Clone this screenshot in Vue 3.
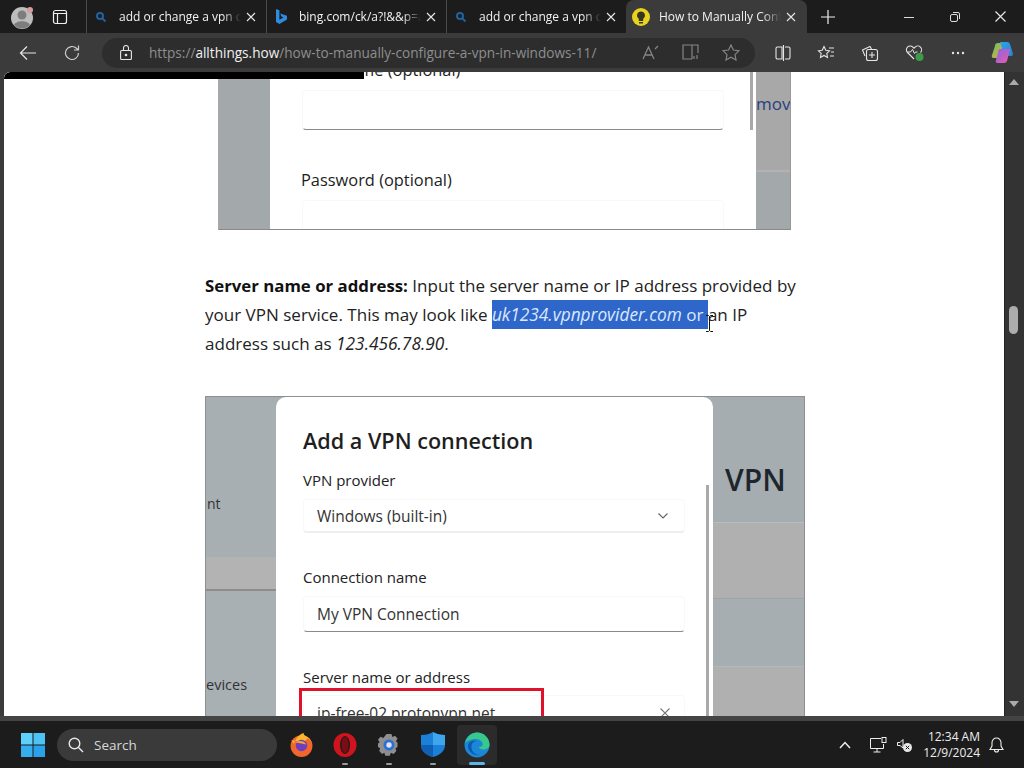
<script setup>
const tabs = [
  { title: 'add or change a vpn connection', icon: 'search' },
  { title: 'bing.com/ck/a?!&&p=abcdef', icon: 'bing' },
  { title: 'add or change a vpn connection', icon: 'search' },
  { title: 'How to Manually Configure', icon: 'bulb', active: true }
]
</script>

<template>
  <div class="screen">
    <header class="tabstrip">
      <div class="avatar">
        <svg width="24" height="24" viewBox="0 0 24 24">
          <circle cx="12" cy="13" r="11" fill="#bdbdbd" />
          <circle cx="12" cy="10" r="4.5" fill="#7d7d7d" />
          <path d="M4 20c2-5 14-5 16 0a11 11 0 0 1-16 0z" fill="#7d7d7d" />
          <circle cx="20" cy="5" r="3" fill="#d99aa0" />
        </svg>
      </div>
      <button class="vtabs">
        <svg width="16" height="16" viewBox="0 0 16 16" fill="none" stroke="#eee" stroke-width="1.2">
          <rect x="1.500" y="1.500" width="13" height="13" rx="2" />
          <path d="M1.500 4.500h13M5.500 4.500v10" />
        </svg>
      </button>
      <div v-for="(t, i) in tabs" :key="i" class="tab" :class="{ active: t.active }">
        <span class="fav">
          <svg v-if="t.icon === 'search'" width="12" height="12" viewBox="0 0 12 12" fill="none" stroke="#22619f" stroke-width="2">
            <circle cx="5" cy="5" r="3" /><path d="M7.500 7.500l3 3" />
          </svg>
          <svg v-else-if="t.icon === 'bing'" width="14" height="17" viewBox="0 0 14 17">
            <path d="M2 1l3.400 1.200v9.600l4-2.300-2-1-1.200-3L13 7.800v3.600L5.400 16 2 14z" fill="#2f8be0" />
          </svg>
          <svg v-else width="18" height="18" viewBox="0 0 18 18">
            <circle cx="9" cy="9" r="9" fill="#e6d420" />
            <path d="M9 3.500a4 4 0 0 0-2.200 7.300V13h4.400v-2.200A4 4 0 0 0 9 3.500z" fill="#3a3320" />
            <rect x="7" y="14" width="4" height="1.500" fill="#3a3320" />
          </svg>
        </span>
        <span class="tab-title">{{ t.title }}</span>
        <svg class="tab-x" width="10" height="10" viewBox="0 0 10 10" stroke="#e8e8e8" stroke-width="1.100">
          <path d="M1 1l8 8M9 1l-8 8" />
        </svg>
      </div>
      <button class="newtab">
        <svg width="14" height="14" viewBox="0 0 14 14" stroke="#eee" stroke-width="1.200"><path d="M7 0v14M0 7h14" /></svg>
      </button>
      <div class="winctl">
        <svg width="10" height="10" viewBox="0 0 10 10" stroke="#ddd"><path d="M0 5.500h10" /></svg>
        <svg width="10" height="10" viewBox="0 0 10 10" fill="none" stroke="#ddd"><rect x=".5" y="2.500" width="7" height="7" rx="1.500" /><path d="M3 .5h5a1.500 1.500 0 0 1 1.500 1.500v5" /></svg>
        <svg width="11" height="11" viewBox="0 0 11 11" stroke="#eee" stroke-width="1.100"><path d="M.5.500l10 10M10.500.5l-10 10" /></svg>
      </div>
    </header>

    <nav class="toolbar">
      <svg class="back" width="18" height="16" viewBox="0 0 18 16" fill="none" stroke="#e6e6e6" stroke-width="1.200"><path d="M17 8H1.500M8 1.500L1.500 8 8 14.500" /></svg>
      <svg class="reload" width="18" height="18" viewBox="0 0 18 18" fill="none" stroke="#cfcfcf" stroke-width="1.200"><path d="M15.500 9a6.500 6.500 0 1 1-2-4.700L15.500 6M15.500 1.500V6H11" /></svg>
      <div class="addr">
        <svg class="lock" width="12" height="15" viewBox="0 0 12 15" fill="none" stroke="#e6e6e6" stroke-width="1.100"><rect x=".6" y="5.500" width="10.800" height="9" rx="1" /><path d="M3.500 5.500V3a2.500 2.500 0 0 1 5 0v2.500" /><circle cx="6" cy="10" r=".8" fill="#e6e6e6" /></svg>
        <span class="url">https://<b>allthings.how</b>/how-to-manually-configure-a-vpn-in-windows-11/</span>
        <span class="addr-icons">
          <svg width="18" height="16" viewBox="0 0 18 16" fill="none" stroke="#858585" stroke-width="1.300"><path d="M1 15L6.500 3 12 15M3 11h7M13 5l3-3" /></svg>
          <svg width="18" height="16" viewBox="0 0 18 16" fill="none" stroke="#858585" stroke-width="1.200"><path d="M10 15H1V1h15v8M10 1v14M12 12v3M15 11v4" /></svg>
          <svg width="18" height="17" viewBox="0 0 18 17" fill="none" stroke="#858585" stroke-width="1.200"><path d="M9 1l2.400 5 5.600.7-4 3.900 1 5.400-5-2.700L4 16l1-5.400-4-3.900L6.600 6z" /></svg>
        </span>
      </div>
      <div class="tools">
        <svg width="16" height="16" viewBox="0 0 16 16" fill="none" stroke="#e6e6e6" stroke-width="1.100"><path d="M7 2H2.500A1.500 1.500 0 0 0 1 3.500v9A1.500 1.500 0 0 0 2.500 14H7zM8.500 0v16M10 2h3.500A1.500 1.500 0 0 1 15 3.500v9a1.500 1.500 0 0 1-1.500 1.500H10" /></svg>
        <svg width="18" height="16" viewBox="0 0 18 16" fill="none" stroke="#e6e6e6" stroke-width="1.100"><path d="M7 1.500l1.800 3.800 3.700.5-2.700 2.600.7 4-3.500-1.900L3.500 12.400l.7-4L1.500 5.800l3.700-.5zM12 3h5M14 7h3M13 11h4" /></svg>
        <svg width="18" height="18" viewBox="0 0 18 18" fill="none" stroke="#e6e6e6" stroke-width="1.100"><rect x="5.500" y="5.500" width="11" height="11" rx="2" /><path d="M11 8v6M8 11h6M4 12L1.500 6 9 2.500 10.500 5" /></svg>
        <svg width="20" height="18" viewBox="0 0 20 18"><path d="M9 15L2.500 8.500a3.800 3.800 0 0 1 5.400-5.400L9 4.200l1.100-1.100a3.800 3.800 0 0 1 5.400 5.400" fill="none" stroke="#e6e6e6" stroke-width="1.100" /><path d="M2.500 8h3l2-2.500 2 4 1-1.500h2" fill="none" stroke="#e6e6e6" /><circle cx="14.500" cy="13" r="4" fill="#3e9a4b" /></svg>
        <svg width="14" height="4" viewBox="0 0 14 4" fill="#e6e6e6"><circle cx="2" cy="2" r="1.200" /><circle cx="7" cy="2" r="1.200" /><circle cx="12" cy="2" r="1.200" /></svg>
        <svg width="23" height="23" viewBox="0 0 23 23">
          <defs>
            <linearGradient id="cpA" x1="0" y1="0" x2="1" y2="1"><stop offset="0" stop-color="#2ba6e8" /><stop offset="1" stop-color="#2d7fd8" /></linearGradient>
            <linearGradient id="cpB" x1="0" y1="0" x2="1" y2="1"><stop offset="0" stop-color="#8a62e8" /><stop offset="1" stop-color="#e85fa8" /></linearGradient>
            <linearGradient id="cpC" x1="0" y1="0" x2="1" y2="1"><stop offset="0" stop-color="#5dc46a" /><stop offset="1" stop-color="#f0a53a" /></linearGradient>
          </defs>
          <path d="M7 2h6l-4 13a3 3 0 0 1-3 2H3a2 2 0 0 1-2-3L4 5a3 3 0 0 1 3-3z" fill="url(#cpC)" />
          <path d="M9 1h7a3 3 0 0 1 3 2l3 10a2 2 0 0 1-2 2h-6z" fill="url(#cpA)" />
          <path d="M8 8h11l-3 12a3 3 0 0 1-3 2H7a2 2 0 0 1-2-3z" fill="url(#cpB)" />
        </svg>
      </div>
    </nav>

    <main class="main">
      <div class="page">
        <div class="find-bar"></div>

        <figure class="shot shot-a">
          <div class="a-dialog">
            <div class="a-label clipped">User name (optional)</div>
            <div class="a-field underlined"></div>
            <div class="a-label pw">Password (optional)</div>
            <div class="a-field"></div>
            <i class="a-scroll"></i>
          </div>
          <div class="a-side"><span class="mov">mov</span></div>
        </figure>

        <p class="para">
          <strong>Server name or address:</strong> Input the server name or IP address provided by
          your VPN service. This may look like <span class="sel"><em>uk1234.vpnprovider.com</em> or </span>an IP
          address such as <em>123.456.78.90</em>.
        </p>

        <figure class="shot shot-b">
          <div class="b-left">
            <div class="b-l1"><span>nt</span></div>
            <div class="b-l2"></div>
            <div class="b-l3"><span>evices</span></div>
          </div>
          <div class="b-dialog">
            <h3>Add a VPN connection</h3>
            <div class="b-label">VPN provider</div>
            <div class="b-field select">
              <span>Windows (built-in)</span>
              <svg width="10" height="6" viewBox="0 0 10 6" fill="none" stroke="#666" stroke-width="1.200"><path d="M.5.500L5 5 9.500.5" /></svg>
            </div>
            <div class="b-label second">Connection name</div>
            <div class="b-field input"><span>My VPN Connection</span></div>
            <div class="b-label third">Server name or address</div>
            <div class="b-field server">
              <span>ip-free-02.protonvpn.net</span>
              <svg width="10" height="10" viewBox="0 0 10 10" stroke="#777" stroke-width="1.100"><path d="M.5.500l9 9M9.500.5l-9 9" /></svg>
            </div>
            <i class="red"></i>
            <i class="b-scroll"></i>
          </div>
          <div class="b-right">
            <div class="b-r1"><span>VPN</span></div>
            <div class="b-r2"></div>
            <div class="b-r3"></div>
            <div class="b-r4"></div>
          </div>
        </figure>

        <svg class="ibeam" width="9" height="17" viewBox="0 0 9 17" fill="none" stroke="#111" stroke-width="1"><path d="M1 .5h2.500l1 1 1-1H8M4.500 1.500v14M1 16.500h2.500l1-1 1 1H8" /></svg>
      </div>
      <aside class="scrollbar">
        <i class="tri up"></i>
        <i class="thumb"></i>
        <i class="tri down"></i>
      </aside>
    </main>

    <div class="strip"></div>

    <footer class="taskbar">
      <svg class="winlogo" width="24" height="24" viewBox="0 0 24 24" fill="#4cc2ff">
        <rect width="11.500" height="11.500" fill="#5fd0fb" /><rect x="12.500" width="11.500" height="11.500" fill="#4cc2f5" />
        <rect y="12.500" width="11.500" height="11.500" fill="#35aef0" /><rect x="12.500" y="12.500" width="11.500" height="11.500" fill="#2ba0ea" />
      </svg>
      <div class="search">
        <svg width="16" height="16" viewBox="0 0 16 16" fill="none" stroke="#e8e8e8" stroke-width="1.400"><circle cx="6.500" cy="6.500" r="5.300" /><path d="M10.500 10.500L15 15" /></svg>
        <span>Search</span>
      </div>
      <div class="apps">
        <div class="app">
          <svg width="25" height="25" viewBox="0 0 24 24"><circle cx="12" cy="13.500" r="10.500" fill="#f2662c" /><path d="M2 8c2 2 2 3 3 3 1-4 5-9 9-10 0 2 2 3 4 4 3 2 4 5 4 8 0-3-2-6-4-7l-4 4z" fill="#fbb52d" /><circle cx="12" cy="13" r="5.500" fill="#6b3fc0" /><path d="M6.500 10c3-2 8-2 10 2-3-1-6-1-10-2z" fill="#f9a02a" /></svg>
        </div>
        <div class="app dot">
          <svg width="24" height="24" viewBox="0 0 24 24"><ellipse cx="12" cy="12" rx="11.500" ry="12" fill="#d0141e" /><ellipse cx="12" cy="12" rx="5" ry="9" fill="#1c1c1c" /><ellipse cx="12" cy="12" rx="3.500" ry="8" fill="#7a0e14" /></svg>
        </div>
        <div class="app dot">
          <svg width="24" height="24" viewBox="0 0 24 24"><path d="M9.500 1h5l.8 3 2.800-1.200 2.500 3-1.800 2.500 1.700 1.200V14l-2 1.200.8 2.800-2.700 3-2.800-1.200-1 3h-4.500l-1-3L5 21l-2.700-3 .8-2.800L1 14V10.500l1.700-1.200L1 6.800l2.500-3L6.300 5z" fill="#8f8f8f" /><circle cx="12" cy="12" r="5.500" fill="#2e6fd6" /><circle cx="12" cy="12" r="2.700" fill="#dfe7f2" /></svg>
        </div>
        <div class="app dot">
          <svg width="24" height="25" viewBox="0 0 24 25"><path d="M12 0c3 2 7 3 12 3v10c0 6-5 10-12 12C5 23 0 19 0 13V3c5 0 9-1 12-3z" fill="#1c7fd8" /><path d="M12 0c3 2 7 3 12 3v10H12z" fill="#3fa6ee" /><path d="M12 13H0c0 6 5 10 12 12z" fill="#0f5fb5" /></svg>
        </div>
        <div class="app active">
          <svg width="26" height="26" viewBox="0 0 26 26"><circle cx="13" cy="13" r="12.500" fill="#1c86d8" /><path d="M1 11C3 4 8 .5 13 .5 20 .5 25.500 6 25.500 13c0 3-3 4.500-6 4.500s-4-1-5-2.500c3 0 5-1.500 4-4-1.500-3.500-5-4.500-8-4C6 7.500 3 9 1 11z" fill="#38c88a" /><path d="M13 9c-4 0-6 3-5.500 7 .5 4 4 7 8.500 7-6 1-12-3-12-9 0-4 4-6 9-5z" fill="#0d5ba8" /></svg>
        </div>
      </div>
      <div class="tray">
        <svg width="12" height="8" viewBox="0 0 12 8" fill="none" stroke="#eee" stroke-width="1.500"><path d="M1 7l5-5.500L11 7" /></svg>
        <svg class="mon" width="17" height="16" viewBox="0 0 17 16" fill="none" stroke="#eee" stroke-width="1"><path d="M11 1.500H.5v10h13V7M7 11.500V15M3.500 15h7" /><rect x="12" y=".5" width="4" height="5" /></svg>
        <svg class="spk" width="15" height="14" viewBox="0 0 15 14"><path d="M.5 4.500h2.500L6 1.500V10L3 7.500H.5z" fill="none" stroke="#eee" /><circle cx="10.500" cy="9.500" r="4.500" fill="#e8e8e8" /><path d="M8.800 7.800l3.400 3.400M12.200 7.800l-3.400 3.400" stroke="#1c1c1c" /></svg>
        <div class="clock"><span>12:34 AM</span><span>12/9/2024</span></div>
        <svg width="15" height="16" viewBox="0 0 15 16" fill="none" stroke="#eee" stroke-width="1.100"><path d="M7.500 1a4.500 4.500 0 0 0-4.500 4.500V9L1 12.500h13L12 9V5.500A4.500 4.500 0 0 0 7.500 1zM5.500 13a2 2 0 0 0 4 0" /></svg>
      </div>
    </footer>
  </div>
</template>

<style>
html, body { margin: 0; background: #1c1c1c; }
</style>

<style scoped>
.screen { width: 1024px; height: 768px; display: flex; flex-direction: column; overflow: hidden; font-family: "Open Sans", sans-serif; background: #3b3b3b; position: relative; }
button { background: none; border: 0; padding: 0; display: flex; }

/* tab strip */
.tabstrip { height: 33px; flex: none; background: #1c1c1c; display: flex; align-items: center; }
.avatar { width: 24px; height: 24px; margin-left: 10px; }
.vtabs { margin-left: 18px; margin-right: 18px; }
.tab { width: 180px; height: 33px; box-sizing: border-box; display: flex; align-items: center; padding-left: 5px; border-left: 1px solid #4a4a4a; position: relative; }
.tab .fav { width: 18px; display: flex; justify-content: center; flex: none; }
.tab.active { background: #3b3b3b; border-radius: 8px 8px 0 0; border-left: 0; width: 181px; padding-left: 6px; }
.tab-title { color: #f2f2f2; font-size: 12px; margin-left: 9px; width: 122px; white-space: nowrap; overflow: hidden; -webkit-mask-image: linear-gradient(90deg, #000 85%, transparent); mask-image: linear-gradient(90deg, #000 85%, transparent); }
.tab-x { position: absolute; right: 10px; top: 12px; }
.tab.active .tab-x { right: 11px; }
.newtab { margin-left: 14px; }
.winctl { margin-left: auto; width: 102px; margin-right: 18px; display: flex; justify-content: space-between; align-items: center; }

/* toolbar */
.toolbar { height: 39px; flex: none; background: #3b3b3b; display: flex; align-items: center; }
.back { margin-left: 19px; }
.reload { margin-left: 26px; }
.addr { margin-left: 21px; width: 653px; height: 30px; background: #2d2d2d; border-radius: 15px; display: flex; align-items: center; box-sizing: border-box; padding-left: 18px; }
.lock { flex: none; }
.url { margin-left: 17px; font-size: 13.600px; color: #8e8e8e; white-space: nowrap; }
.url b { color: #f0f0f0; font-weight: 400; }
.addr-icons { margin-left: auto; display: flex; gap: 22px; margin-right: 15px; }
.tools { flex: 1; display: flex; justify-content: space-between; align-items: center; padding: 0 10px 0 20px; }

/* main */
.main { height: 644px; flex: none; padding-left: 4px; display: flex; background: #3b3b3b; }
.page { width: 1000px; height: 644px; background: #fff; overflow: hidden; position: relative; box-sizing: border-box; padding-left: 201px; border-top-left-radius: 6px; }
.find-bar { position: absolute; left: 0; top: 0; width: 360px; height: 7px; background: #000; border-top-left-radius: 6px; z-index: 2; }
.shot { margin: 0; display: flex; overflow: hidden; box-sizing: border-box; }

.shot-a { margin-left: 13px; width: 573px; height: 158px; border-left: 1px solid #aaa; border-right: 1px solid #999; border-bottom: 1px solid #8a8a8a; background: linear-gradient(90deg, #a3a9ab, #a6abad 70%, #9fa5a7); }
.a-dialog { margin-left: 51px; width: 486px; background: #fff; box-sizing: border-box; padding-left: 32px; position: relative; flex: none; }
.a-label { font-size: 16.400px; color: #1d1d1d; line-height: 22px; }
.a-label.clipped { margin-top: -13px; margin-left: -2px; }
.a-label.pw { margin-top: 39px; margin-left: -1px; }
.a-field { width: 422px; height: 40px; box-sizing: border-box; margin-top: 9px; border: 1px solid #f8f8f8; border-radius: 4px; }
.a-field.underlined { border-bottom: 1.500px solid #8a8a8a; }
.a-scroll { position: absolute; left: 480px; top: 0; width: 3px; height: 58px; background: #a9a9a9; }
.a-side { flex: 1; background: linear-gradient(#a8a8a8 0 98px, #b2b2b2 98px 100px, #a3a9ab 100px); overflow: hidden; }
.mov { display: block; margin-top: 21px; color: #27407f; font-size: 17px; line-height: 22px; white-space: nowrap; }

.para { margin: 41px 0 0; width: 600px; font-size: 17.050px; line-height: 29px; color: #222; }
.para strong { font-weight: 700; color: #111; font-size: 16.800px; }
.sel { display: inline-block; line-height: 29px; background: #2f66c9; color: #dbe9ff; white-space: pre; }
.para em { font-style: italic; font-size: 17.300px; }

.shot-b { margin-top: 38px; width: 600px; height: 330px; border: 1px solid #8f8f8f; border-bottom: 0; background: #a8afb2; }
.b-left { width: 70px; flex: none; display: flex; flex-direction: column; font-size: 14px; color: #333; }
.b-l1 { height: 160px; background: #a8afb2; padding-top: 98px; box-sizing: border-box; line-height: 18px; overflow: hidden; padding-left: 1px; }
.b-l2 { height: 35px; background: #b3b3b3; border-bottom: 2px solid #8d8d8d; box-sizing: border-box; }
.b-l3 { height: 135px; background: #a9b0b3; padding-top: 84px; box-sizing: border-box; line-height: 20px; font-size: 14.500px; white-space: nowrap; overflow: hidden; }
.b-dialog { width: 437px; flex: none; background: #fff; border-radius: 10px 10px 0 0; box-sizing: border-box; padding: 29px 0 0 27px; position: relative; }
.b-dialog h3 { margin: 0; font-size: 21.600px; font-weight: 600; color: #1f1f1f; line-height: 30px; }
.b-label { font-size: 15px; color: #222; line-height: 20px; margin-top: 14px; }
.b-label.second { margin-top: 34px; }
.b-label.third { margin-top: 35px; }
.b-field { width: 382px; height: 36px; box-sizing: border-box; margin-top: 9px; border: 1px solid #f8f8f8; border-radius: 4px; display: flex; align-items: center; justify-content: space-between; padding: 0 16px 0 13px; font-size: 15.500px; color: #333; }
.b-field.select { height: 34px; padding-top: 1px; border-bottom: 2px solid #eeeeee; }
.b-field.input { border-bottom: 1.500px solid #8a8a8a; }
.b-field.server { height: 36px; margin-top: 8px; padding-right: 14px; }
.red { position: absolute; left: 23px; top: 291px; width: 245px; height: 60px; box-sizing: border-box; border: 3px solid #e0112b; }
.b-scroll { position: absolute; left: 430px; top: 88px; bottom: 0; width: 3px; background: #a9a9a9; }
.b-right { flex: 1; display: flex; flex-direction: column; box-shadow: inset 2px 0 0 #999; }
.b-r1 { height: 125px; background: #a5adb1; font-size: 30px; font-weight: 600; color: #1d262c; box-sizing: border-box; padding: 63px 0 0 12px; line-height: 40px; }
.b-r2 { height: 76px; background: #b0b0b0; border-top: 1px solid #b8bcbe; box-sizing: border-box; }
.b-r3 { height: 68px; background: #a7aeb2; border-top: 1px solid #9ea4a7; box-sizing: border-box; }
.b-r4 { flex: 1; background: #b0b0b0; border-top: 1px solid #b4b8ba; }

.ibeam { position: absolute; left: 701px; top: 243px; z-index: 3; }

/* scrollbar */
.scrollbar { width: 20px; flex: none; background: #333; border-left: 1px solid #222; box-sizing: border-box; position: relative; display: flex; flex-direction: column; align-items: center; }
.tri { width: 0; height: 0; border-left: 5px solid transparent; border-right: 5px solid transparent; display: block; margin-right: 2px; }
.tri.up { margin-top: 7px; border-bottom: 6px solid #aaa; }
.tri.down { margin-top: auto; margin-bottom: 9px; border-top: 6px solid #aaa; }
.thumb { width: 9px; height: 28px; border-radius: 5px; background: #acacac; margin-top: 221px; margin-right: 2px; display: block; }

.strip { height: 5px; flex: none; background: #444; }

/* taskbar */
.taskbar { height: 47px; flex: none; background: #1c1c1c; display: flex; align-items: center; }
.winlogo { margin-left: 21px; flex: none; }
.search { margin-left: 12px; width: 220px; height: 32px; border-radius: 16px; background: #3a3a3a; display: flex; align-items: center; box-sizing: border-box; padding-left: 11px; color: #d8d8d8; font-size: 13.500px; gap: 10px; flex: none; }
.apps { margin-left: 4px; display: flex; align-items: center; gap: 4px; }
.app { width: 40px; height: 40px; display: flex; align-items: center; justify-content: center; position: relative; border-radius: 4px; }
.app.active { background: #2b2b2b; }
.app.dot::after { content: ""; position: absolute; bottom: 0; left: 17px; width: 6px; height: 2px; border-radius: 1px; background: #9a9a9a; }
.app.active::after { content: ""; position: absolute; bottom: 0; left: 12px; width: 16px; height: 3px; border-radius: 2px; background: #5fb4e8; }
.tray { margin-left: auto; display: flex; align-items: center; width: 185px; padding-right: 20px; box-sizing: border-box; color: #eee; }
.mon { margin-left: 19px; }
.spk { margin-left: 10px; }
.clock { margin-left: auto; margin-right: 9px; display: flex; flex-direction: column; align-items: flex-end; font-size: 12px; line-height: 16px; color: #eee; }
</style>
